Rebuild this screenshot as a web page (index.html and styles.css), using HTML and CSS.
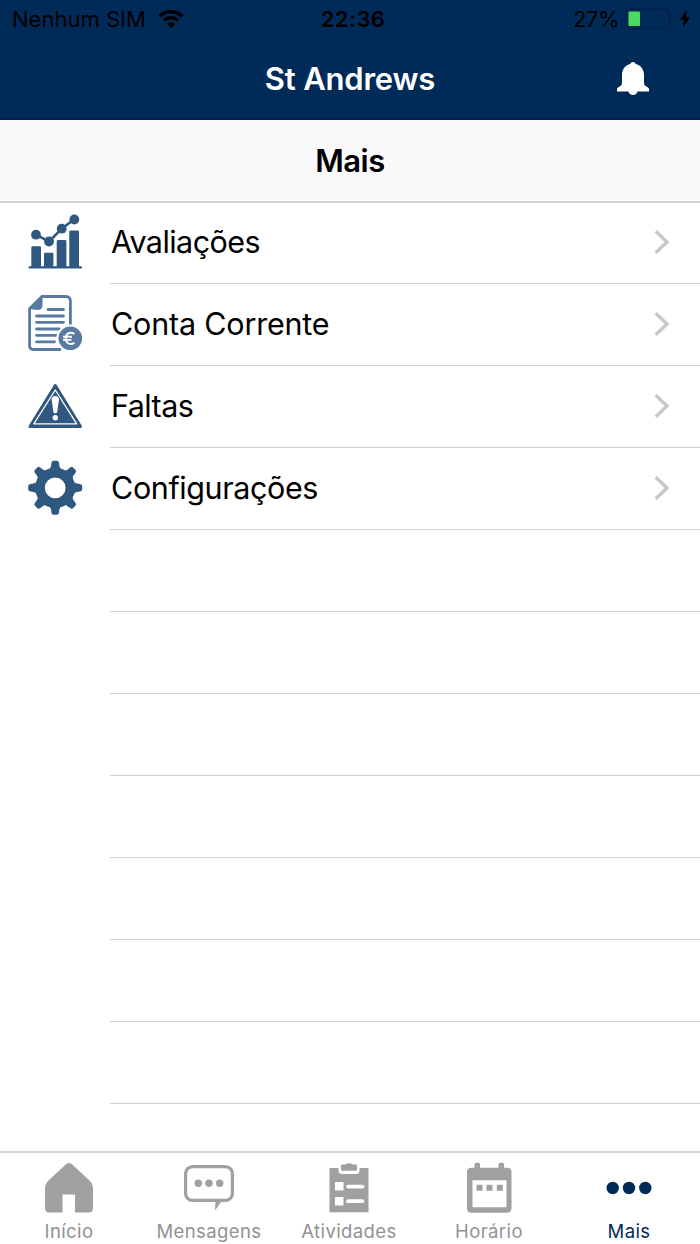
FILE: index.html
```html
<!DOCTYPE html>
<html lang="pt">
<head>
  <meta charset="UTF-8" />
  <meta name="viewport" content="width=device-width, initial-scale=1.0"/>
  <title>St Andrews</title>
  <link rel="stylesheet" href="styles.css">
</head>

<body>
  <header class="top">
    <div class="status">
      <div class="status-left">
        <span>Nenhum SIM</span>
        <svg class="wifi" width="26" height="19" viewBox="0 0 26 19">
          <path d="M1.6 6.4C8 .2 18 .2 24.4 6.4M5.8 10.6c4-3.8 10.4-3.8 14.4 0" fill="none" stroke="#000" stroke-width="3.6"/>
          <path d="M8.8 14c2.4-2.3 6-2.3 8.4 0L13 18.2z"/>
        </svg>
      </div>
      <span class="clock">22:36</span>
      <div class="status-right">
        <span class="percent">27%</span>
        <svg class="battery" width="50" height="22" viewBox="0 0 50 22">
          <rect x="1" y="1" width="43.5" height="19.5" rx="4" fill="none" stroke="#02224a" stroke-width="1.6"/>
          <rect x="3.5" y="3.5" width="11.5" height="14.5" rx="1" fill="#4cd964"/>
          <path d="M46.8 7.5c2 1 2 5.5 0 6.5z" fill="#02224a"/>
        </svg>
        <svg width="10" height="18" viewBox="0 0 10 18"><path d="M6.5 0L0 10h4L2.8 18 10 7.2H6z"/></svg>
      </div>
    </div>
    <div class="navbar">
      <h1>St Andrews</h1>
      <svg class="bell" width="32" height="34" viewBox="0 0 32 34">
        <path fill="#fff" d="M16 0c1.300 0 2.300.7 2.600 1.900C24 3 27 7.500 27 13v8c0 2.500 1.800 3.300 4 4.400.7.4 1 .9 1 1.600v2.500H20.500C20 31.800 18.500 33 16 33s-4-1.200-4.500-3.500H0V27c0-.7.3-1.200 1-1.600 2.200-1.100 4-1.900 4-4.400v-8C5 7.500 8 3 13.400 1.900 13.700.7 14.700 0 16 0z"/>
      </svg>
    </div>
  </header>

  <div class="subtitle"><h2>Mais</h2></div>

  <main class="list">
    <a class="row">
      <svg class="row-icon" viewBox="0 0 56 56" fill="#2f5780">
        <rect x="1.5" y="52.2" width="53.5" height="2.4" rx="1"/>
        <path d="M4.3 53V33.5q0-1.2 1.2-1.2h7.3q1.2 0 1.2 1.2V53zM17 53V39.9q0-1.200 1.200-1.200h7q1.200 0 1.200 1.200V53zM29.700 53V27.200q0-1.200 1.200-1.200h7.300q1.200 0 1.200 1.200V53zM42.300 53V17.700q0-1.200 1.200-1.200h7.300q1.200 0 1.200 1.200V53z"/>
        <path d="M9 20.700l13 7 12.700-13 12.600-9.400" fill="none" stroke="#2f5780" stroke-width="2.6"/>
        <circle cx="9" cy="20.7" r="4.9"/>
        <circle cx="22" cy="27.5" r="4.9"/>
        <circle cx="34.7" cy="14.7" r="4.9"/>
        <circle cx="47.3" cy="5.5" r="4.9"/>
      </svg>
      <span class="row-label tight">Avaliações</span>
      <svg class="chevron" viewBox="0 0 16 26"><path d="M1.7 2.2L13 13 1.7 23.8"/></svg>
    </a>
    <a class="row">
      <svg class="row-icon" viewBox="0 0 56 56" fill="#587aa0">
        <path d="M43.4 30V5q0-4.500-4.500-4.500H15L2.600 12.500v37q0 4 4 4h27.400" fill="none" stroke="#587aa0" stroke-width="2.800"/>
        <path d="M2 13L15.500-.5v9.500q0 5-5 5z"/>
        <path d="M21 13.500h15.500M9.500 20h27M9.500 26.300h27M9.500 33h23M9.500 39.300h20M9.500 45.800h18" fill="none" stroke="#587aa0" stroke-width="2.800" stroke-linecap="round"/>
        <circle cx="43.3" cy="42.3" r="13.8" fill="#fff"/>
        <circle cx="43.3" cy="42.3" r="11.8"/>
        <path d="M47.500 37.800C42.500 35 38.700 38 38.700 42.300s3.800 7.300 8.800 4.500M36 40.700h9M36 43.900h8.500" fill="none" stroke="#fff" stroke-width="1.900"/>
      </svg>
      <span class="row-label">Conta Corrente</span>
      <svg class="chevron" viewBox="0 0 16 26"><path d="M1.7 2.2L13 13 1.7 23.8"/></svg>
    </a>
    <a class="row">
      <svg class="row-icon" viewBox="0 0 56 56" fill="#2f5780">
        <path d="M28.3 7.5L53.5 48.5H3z" stroke="#2f5780" stroke-width="3" stroke-linejoin="round"/>
        <path d="M28.3 12L49.7 45.8H6.8z" fill="none" stroke="#fff" stroke-width="1.3" stroke-linejoin="round"/>
        <path d="M24.6 21.5c0-4.800 7.400-4.800 7.400 0L30.200 34c-.3 1.700-3.500 1.700-3.800 0z" fill="#fff"/>
        <circle cx="28.3" cy="39.7" r="2.7" fill="#fff"/>
      </svg>
      <span class="row-label tight">Faltas</span>
      <svg class="chevron" viewBox="0 0 16 26"><path d="M1.7 2.2L13 13 1.7 23.8"/></svg>
    </a>
    <a class="row">
      <svg class="row-icon" viewBox="0 0 56 56" fill="#2f5780">
        <defs>
          <path id="tooth" d="M21.5 10q2.200-1.500 2.500-4l.4-3q.3-2.200 2-2.200h3.600q1.700 0 2 2.200l.4 3q.3 2.500 2.700 4z"/>
        </defs>
        <circle cx="28.2" cy="27.8" r="15.2" fill="none" stroke="#2f5780" stroke-width="9.6"/>
        <use href="#tooth"/>
        <use href="#tooth" transform="rotate(45 28.2 27.8)"/>
        <use href="#tooth" transform="rotate(90 28.2 27.8)"/>
        <use href="#tooth" transform="rotate(135 28.2 27.8)"/>
        <use href="#tooth" transform="rotate(180 28.2 27.8)"/>
        <use href="#tooth" transform="rotate(225 28.2 27.8)"/>
        <use href="#tooth" transform="rotate(270 28.2 27.8)"/>
        <use href="#tooth" transform="rotate(315 28.2 27.8)"/>
      </svg>
      <span class="row-label snug">Configurações</span>
      <svg class="chevron" viewBox="0 0 16 26"><path d="M1.7 2.2L13 13 1.7 23.8"/></svg>
    </a>
    <div class="row"></div>
    <div class="row"></div>
    <div class="row"></div>
    <div class="row"></div>
    <div class="row"></div>
    <div class="row"></div>
    <div class="row"></div>
  </main>

  <nav class="tabs">
    <a class="tab">
      <svg viewBox="0 0 50 52">
        <path d="M22 2.2q3-2.400 6 0L46 19q3 3 3 7v20q0 4.500-4.500 4.500H31V32.500H18.500V50.500H5.500Q1 50.500 1 46V26q0-4 3-7z"/>
      </svg>
      <span>Início</span>
    </a>
    <a class="tab">
      <svg viewBox="0 0 50 52">
        <rect x="1.6" y="4.6" width="46.8" height="33.8" rx="7" fill="none" stroke="#a0a0a0" stroke-width="3.2"/>
        <path d="M31.5 38h7L31 48.500z"/>
        <circle cx="14.3" cy="21.3" r="3.7"/>
        <circle cx="25" cy="21.3" r="3.7"/>
        <circle cx="35.7" cy="21.3" r="3.7"/>
      </svg>
      <span>Mensagens</span>
    </a>
    <a class="tab">
      <svg viewBox="0 0 50 52">
        <path d="M5.5 6h9v2.500q0 3.500 3.500 3.500h14q3.500 0 3.500-3.500V6h9v44.300h-39z"/>
        <path d="M17 3.800q0-1.300 1.300-1.300H21Q22.500 1.300 25 1.300t4 1.200h2.700q1.300 0 1.300 1.300v3.700q0 1.300-1.300 1.300H18.300Q17 8.800 17 7.500z"/>
        <path d="M11 20h8.500v8.500H11zM11 35h8.500v8.500H11z" fill="#fff"/>
        <path d="M24 24.600h14.500M24 39.200h14.500" stroke="#fff" stroke-width="3.800" stroke-linecap="round"/>
      </svg>
      <span>Atividades</span>
    </a>
    <a class="tab">
      <svg viewBox="0 0 50 52">
        <path d="M7.500 5.700H43q4.500 0 4.500 4.500v36q0 4.500-4.500 4.500H7.500Q3 50.700 3 46.200v-36q0-4.500 4.500-4.500z"/>
        <path d="M10.500 6V2.500Q10.500.8 12.200.8h2Q16 .8 16 2.500V6zM34.500 6V2.500q0-1.700 1.700-1.700h2q1.800 0 1.800 1.700V6z"/>
        <path d="M8.500 18.300h34v27h-34z" fill="#fff"/>
        <path d="M12.500 22.800h6v6h-6zM22.500 22.800h6v6h-6zM32.800 22.800h6v6h-6z"/>
      </svg>
      <span>Horário</span>
    </a>
    <a class="tab active">
      <svg viewBox="0 0 50 52">
        <circle cx="8.7" cy="26" r="6.2"/>
        <circle cx="25" cy="26" r="6.2"/>
        <circle cx="41.3" cy="26" r="6.2"/>
      </svg>
      <span>Mais</span>
    </a>
  </nav>
</body>
</html>
```
FILE: styles.css
```css
* {
  box-sizing: border-box;
}

body {
  margin: 0;
  height: 1244px;
  display: flex;
  flex-direction: column;
  background-color: #fff;
  color: #000;
  font-family: Inter, "Liberation Sans", sans-serif;
  overflow: hidden;
}

h1,
h2 {
  margin: 0;
  font-weight: 600;
  font-size: 31px;
  line-height: 40px;
  letter-spacing: -0.2px;
}

h2 {
  letter-spacing: -0.5px;
}

.top {
  height: 120px;
  background-color: #002b59;
  border-bottom: 1px solid #10184c;
  flex-shrink: 0;
}

.status {
  height: 38px;
  display: grid;
  grid-template-columns: 1fr auto 1fr;
  align-items: center;
  padding: 0 10px 0 12px;
  font-size: 22px;
  line-height: 38px;
}

.status-left,
.status-right {
  display: flex;
  align-items: center;
}

.status-right {
  justify-content: flex-end;
}

.clock {
  font-weight: 600;
  letter-spacing: 0.4px;
  margin-left: 4px;
}

.percent {
  letter-spacing: -0.5px;
}

.wifi {
  margin-left: 12px;
}

.battery {
  margin: 0 5px 0 6px;
}

.navbar {
  height: 81px;
  display: grid;
  grid-template-columns: 1fr auto 1fr;
  align-items: center;
  padding-right: 51px;
  padding-left: 51px;
}

.navbar h1 {
  grid-column: 2;
  color: #fff;
}

.bell {
  justify-self: end;
}

.subtitle {
  height: 83px;
  display: flex;
  align-items: center;
  justify-content: center;
  background-color: #fafafa;
  border-bottom: 2px solid #d2d2d2;
  flex-shrink: 0;
}

.list {
  flex: 1;
  min-height: 0;
  overflow: hidden;
}

.row {
  height: 82px;
  display: flex;
  align-items: center;
  padding: 0 30px 2px 27px;
  background: linear-gradient(#d0d0d0, #d0d0d0) 110px 100% / 100% 1px no-repeat;
}

.row:first-child {
  height: 81px;
  padding-bottom: 3px;
}

.row-icon {
  width: 56px;
  height: 56px;
  overflow: visible;
}

.row-label {
  flex: 1;
  margin-left: 28px;
  font-size: 30.5px;
  line-height: 40px;
  letter-spacing: -0.2px;
}

.row-label.snug {
  letter-spacing: -0.4px;
}

.row-label.tight {
  letter-spacing: -0.55px;
}

.chevron {
  width: 16px;
  height: 26px;
  fill: none;
  stroke: #c7c7cc;
  stroke-width: 3.4;
}

.tabs {
  height: 93px;
  display: grid;
  grid-template-columns: repeat(5, 140px);
  border-top: 2px solid #d2d2d2;
  margin-left: -1px;
  padding-top: 9px;
  width: 701px;
  flex-shrink: 0;
}

.tab {
  display: flex;
  flex-direction: column;
  align-items: center;
  color: #929292;
  fill: #a0a0a0;
  font-size: 18.5px;
  line-height: 24px;
  letter-spacing: 0.4px;
}

.tab svg {
  width: 50px;
  height: 52px;
  margin-bottom: 5px;
}

.tab.active {
  color: #002b59;
  fill: #002b59;
}
```
